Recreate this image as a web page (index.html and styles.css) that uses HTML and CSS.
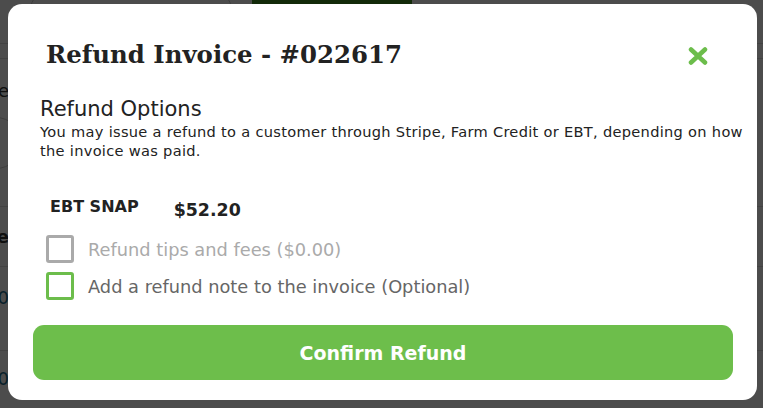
FILE: index.html
```html
<!DOCTYPE html>
<html lang="en">
<head>
    <meta charset="UTF-8">
    <meta name="viewport" content="width=device-width, initial-scale=1.0">
    <title>Refund Invoice</title>
    <link rel="stylesheet" href="styles.css">
</head>
<body>
    <!-- page behind the dialog -->
    <div class="page">
        <div class="page-top">
            <span class="page-pill"></span>
            <span class="page-action"></span>
        </div>
        <div class="page-row thin"></div>
        <div class="page-row block">
            <span class="page-cell">Date</span>
            <span class="page-select"></span>
        </div>
        <div class="page-row head"><span class="page-cell bold">Code</span></div>
        <div class="page-row item"><span class="page-cell link">10</span></div>
        <div class="page-row last"><span class="page-cell link">10</span></div>
    </div>

    <div class="overlay"></div>

    <div class="modal">
        <div class="modal-header">
            <h1>Refund Invoice - #022617</h1>
            <button class="close-btn" aria-label="Close">
                <svg width="20" height="18" viewBox="0 0 20 18">
                    <path d="M3 2.5 L17 15.5 M17 2.5 L3 15.5" stroke="#6cbd4b" stroke-width="4.5" stroke-linecap="round"/>
                </svg>
            </button>
        </div>

        <div class="options">
            <h2>Refund Options</h2>
            <p>You may issue a refund to a customer through Stripe, Farm Credit or EBT, depending on how the invoice was paid.</p>
        </div>

        <div class="amount-row">
            <span class="method">EBT SNAP</span>
            <span class="amount">$52.20</span>
        </div>

        <label class="check disabled">
            <span class="box"></span>
            Refund tips and fees ($0.00)
        </label>
        <label class="check">
            <span class="box green"></span>
            Add a refund note to the invoice (Optional)
        </label>

        <button class="confirm">Confirm Refund</button>
    </div>
</body>
</html>
```

FILE: styles.css
```css
body {
    font-family: "DejaVu Sans", sans-serif;
    margin: 0;
    padding: 0;
    background-color: #fff;
    width: 763px;
    height: 408px;
    overflow: hidden;
}

/* page behind the overlay */
.page-top {
    height: 43px;
    border-bottom: 1px solid #ddd;
    display: flex;
    gap: 20px;
    padding-left: 30px;
}

.page-pill {
    width: 200px;
    height: 38px;
    margin-top: -10px;
    border: 1px solid #ccc;
    border-radius: 20px;
}

.page-action {
    width: 160px;
    height: 40px;
    margin-top: -10px;
    background-color: #3f8e1f;
    border-radius: 8px;
}

.page-row {
    border-bottom: 1px solid #ddd;
    display: flex;
    flex-direction: column;
}

.page-row.thin {
    height: 14px;
}

.page-row.block {
    height: 148px;
    padding-top: 21px;
    box-sizing: border-box;
}

.page-row.head {
    height: 59px;
    justify-content: center;
}

.page-row.item {
    height: 84px;
    padding-top: 20px;
    box-sizing: border-box;
}

.page-row.last {
    height: 56px;
    padding-top: 17px;
    box-sizing: border-box;
    border-bottom: none;
}

.page-cell {
    width: 9px;
    display: flex;
    justify-content: flex-end;
    white-space: nowrap;
    overflow: hidden;
    font-size: 18px;
    color: #333;
}

.page-cell.bold {
    font-weight: bold;
}

.page-cell.link {
    color: #1a6d8f;
}

.page-select {
    width: 50px;
    height: 50px;
    margin: 16px 0 0 -30px;
    border: 1px solid #ccc;
    border-radius: 50%;
}

.overlay {
    position: fixed;
    inset: 0;
    background-color: rgba(0, 0, 0, 0.7);
}

/* dialog */
.modal {
    position: fixed;
    left: 8px;
    top: 4px;
    width: 749px;
    height: 396px;
    box-sizing: border-box;
    background-color: #fff;
    border-radius: 14px;
    padding: 28px 8px 0 25px;
}

.modal-header {
    display: flex;
    justify-content: space-between;
    align-items: center;
    padding: 0 41px 0 13px;
    height: 44px;
}

h1 {
    font-family: "DejaVu Serif", serif;
    font-size: 24.4px;
    font-weight: bold;
    color: #222;
    margin: 0;
}

.close-btn {
    background: none;
    border: none;
    padding: 0;
    cursor: pointer;
    display: flex;
    margin-top: 4px;
}

.options {
    padding-left: 7px;
    margin-top: 20px;
}

h2 {
    font-size: 21px;
    font-weight: normal;
    color: #222;
    margin: 0;
    line-height: 26px;
}

.options p {
    font-size: 14.6px;
    letter-spacing: 0.3px;
    color: #222;
    margin: 0;
    max-width: 712px;
    line-height: 19px;
}

.amount-row {
    display: flex;
    align-items: baseline;
    gap: 35px;
    padding-left: 17px;
    margin-top: 36px;
}

.method {
    font-size: 16px;
    font-weight: bold;
    color: #222;
}

.amount {
    font-size: 17.4px;
    font-weight: bold;
    color: #222;
    position: relative;
    top: 4px;
}

.check {
    display: flex;
    align-items: center;
    gap: 14px;
    padding-left: 13px;
    font-size: 17.8px;
    color: #666;
    height: 28px;
}

.amount-row + .check {
    margin-top: 19px;
}

.check + .check {
    margin-top: 9px;
}

.check.disabled {
    color: #aaa;
}

.box {
    width: 28px;
    height: 28px;
    box-sizing: border-box;
    border: 3px solid #aaa;
    border-radius: 3px;
}

.box.green {
    border-color: #6cbd4b;
}

.confirm {
    display: block;
    width: 700px;
    height: 55px;
    margin-top: 25px;
    background-color: #6dbe4b;
    color: white;
    border: none;
    border-radius: 11px;
    font-family: "DejaVu Sans", sans-serif;
    font-size: 19px;
    font-weight: 600;
    cursor: pointer;
}
```
